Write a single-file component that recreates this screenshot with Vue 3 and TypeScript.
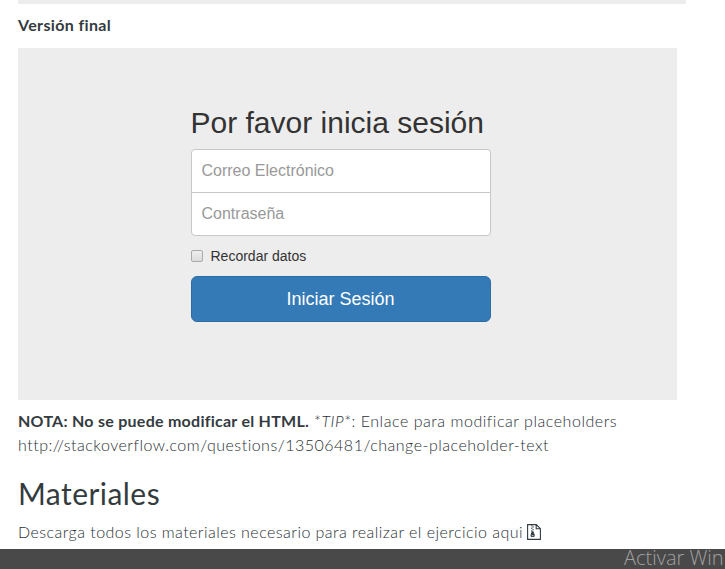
<script setup lang="ts">
import { ref } from 'vue'

const email = ref('')
const password = ref('')
const remember = ref(false)
</script>

<template>
  <main class="page">
    <div class="previous"></div>
    <p class="caption"><strong>Versión final</strong></p>
    <section class="preview">
      <form class="signin" @submit.prevent>
        <h2>Por favor inicia sesión</h2>
        <input v-model="email" class="field first" type="email" placeholder="Correo Electrónico" />
        <input v-model="password" class="field last" type="password" placeholder="Contraseña" />
        <label class="remember">
          <input v-model="remember" type="checkbox" />
          <span>Recordar datos</span>
        </label>
        <button type="submit">Iniciar Sesión</button>
      </form>
    </section>
    <div class="note">
      <p><strong class="warning">NOTA: No se puede modificar el HTML.</strong><span class="tip">*<em>TIP</em>*: Enlace para modificar placeholders</span></p>
      <p class="url">http://stackoverflow.com/questions/13506481/change-placeholder-text</p>
    </div>
    <h1>Materiales</h1>
    <p class="download">
      <span>Descarga todos los materiales necesario para realizar el ejercicio aqui</span>
      <svg viewBox="0 0 14 16" width="14" height="16" aria-hidden="true">
        <path d="M.6.6h8.7l4.1 4.1v10.7H.6z M9.2.6v4.2h4.2" fill="none" stroke="#333b40" stroke-width="1.1" />
        <path d="M4 1h1.4v1.3H4z M5.4 2.3h1.4v1.3H5.4z M4 3.6h1.4v1.3H4z M5.4 4.9h1.4v1.3H5.4z M4 6.2h1.4v1.3H4z" fill="#647078" />
        <path d="M4.7 7.3h1.7l1.4 4.3c.4 2-4.7 2-4.3 0z" fill="#333b40" />
        <path d="M4.7 11.4h1.9v.7H4.7z" fill="#fff" />
      </svg>
    </p>
    <footer><span>Activar Win</span></footer>
  </main>
</template>

<style>
body {
  margin: 0;
  overflow: hidden;
}
</style>

<style scoped>
* {
  box-sizing: border-box;
}
.page {
  display: flex;
  flex-direction: column;
  width: 725px;
  height: 569px;
  background: #fff;
  color: #293034;
  font-family: Lato, 'Open Sans', sans-serif;
  font-size: 16px;
  font-weight: 300;
  line-height: 24px;
}
p,
h1,
h2 {
  margin: 0;
  white-space: nowrap;
}
strong {
  color: #343b3f;
  font-weight: 700;
  letter-spacing: 0.26px;
}
.previous {
  width: 668px;
  height: 4px;
  margin-left: 18px;
  background: #ededed;
}
.caption {
  height: 44px;
  padding: 9px 18px;
}
.caption strong {
  letter-spacing: 0.36px;
}
.preview {
  width: 659px;
  height: 352px;
  margin-left: 18px;
  padding: 58px 0 0 173px;
  background: #ededed;
  color: #333;
  font-family: 'Liberation Sans', Arial, sans-serif;
  font-weight: 400;
}
.signin {
  display: flex;
  flex-direction: column;
  width: 300px;
}
h2 {
  margin: 0 0 10px -0.5px;
  font-size: 30px;
  font-weight: 400;
  line-height: 33px;
}
.field {
  width: 300px;
  height: 44px;
  padding: 10px 9.5px;
  border: 1px solid #c8c8c8;
  background: #fff;
  font: 16px/22px 'Liberation Sans', Arial, sans-serif;
  outline: none;
}
.field::placeholder {
  color: #999;
}
.first {
  border-radius: 4px 4px 0 0;
}
.last {
  margin-top: -1px;
  border-radius: 0 0 4px 4px;
}
.remember {
  display: flex;
  align-items: center;
  gap: 7.5px;
  height: 20px;
  margin: 10px 0;
  font-size: 14px;
  line-height: 20px;
}
.remember input {
  width: 12px;
  height: 12px;
  margin: 0;
  appearance: none;
  border: 1px solid #aaa;
  border-radius: 2px;
  background: linear-gradient(#eee, #dcdcdc);
}
button {
  height: 46px;
  padding: 0 1px 0 0;
  border: 1px solid #2e6da4;
  border-radius: 6px;
  background: #337ab7;
  color: #fff;
  font: 18px/24px 'Liberation Sans', Arial, sans-serif;
}
.note {
  height: 70px;
  padding: 9px 18px 0;
}
.warning {
  margin-right: 5px;
}
.tip {
  letter-spacing: 0.54px;
}
.url {
  letter-spacing: 0.5px;
}
h1 {
  height: 49px;
  padding-left: 18px;
  color: #343b3f;
  font-size: 30px;
  font-weight: 400;
  line-height: 47px;
  letter-spacing: 0.45px;
}
.download {
  display: flex;
  align-items: center;
  gap: 4px;
  height: 30px;
  padding: 0 18px 4px;
  letter-spacing: 0.46px;
}
footer {
  height: 20px;
  padding-left: 624px;
  background: #494949;
  color: #a0a0a0;
  font: 300 20px/18px 'Open Sans', sans-serif;
  white-space: nowrap;
}
</style>
